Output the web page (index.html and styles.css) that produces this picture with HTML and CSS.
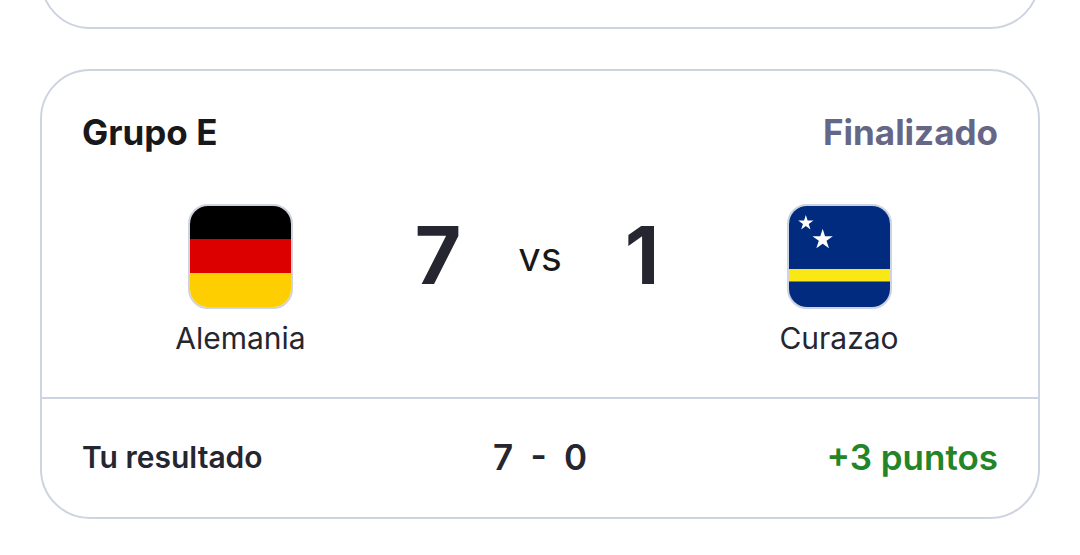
FILE: index.html
```html
<!DOCTYPE html>
<html lang="es">
<head>
<meta charset="utf-8">
<title>Resultados</title>
<link rel="stylesheet" href="styles.css">
</head>
<body>
<main class="list">
  <section class="card card-previous"></section>
  <section class="card">
    <header class="card-header">
      <h2 class="group">Grupo E</h2>
      <span class="status">Finalizado</span>
    </header>
    <div class="match">
      <div class="team">
        <svg class="flag" viewBox="0 0 102 102" preserveAspectRatio="none"><path fill="#000" d="M0 0h102v34H0z"/><path fill="#d00" d="M0 34h102v34H0z"/><path fill="#ffce00" d="M0 68h102v34H0z"/></svg>
        <span class="name">Alemania</span>
      </div>
      <strong class="score score-home">7</strong>
      <span class="versus">vs</span>
      <strong class="score score-away">1</strong>
      <div class="team">
        <svg class="flag" viewBox="0 0 102 102" preserveAspectRatio="none"><path fill="#002b7f" d="M0 0h102v102H0z"/><path fill="#f9e814" d="M0 63.500h102v12.750H0z"/><path fill="#fff" d="M17 9l1.800 5.600h5.900l-4.800 3.500 1.800 5.600-4.700-3.500-4.700 3.500 1.800-5.600-4.800-3.500h5.900z"/><path fill="#fff" d="M34 23l2.400 7.500h7.900l-6.400 4.600 2.500 7.500-6.400-4.600-6.400 4.600 2.500-7.500-6.400-4.600h7.900z"/></svg>
        <span class="name">Curazao</span>
      </div>
    </div>
    <footer class="prediction">
      <span class="label">Tu resultado</span>
      <span class="guess">7 - 0</span>
      <span class="points">+3 puntos</span>
    </footer>
  </section>
</main>
</body>
</html>
```
FILE: styles.css
```css
* { box-sizing: border-box; }
body { margin: 0; height: 555px; overflow: hidden; background: #fff; color: #262631; font-family: Inter, "Liberation Sans", sans-serif; }
.list { display: flex; flex-direction: column; gap: 40px; padding: 0 40px; }
.card { height: 450px; flex: none; border: 2px solid #ced3e1; border-radius: 50px; background: #fff; }
.card-previous { height: 129px; margin-top: -100px; }
.card-header { display: flex; justify-content: space-between; align-items: center; height: 123px; padding: 0 40px 2px; font-size: 35px; line-height: 42px; font-weight: 700; }
.group { margin: 0; color: #18181b; font-size: 35px; font-weight: 700; }
.status { color: #666687; }
.match { display: grid; grid-template-columns: 318px 156px 48px 156px 318px; height: 203px; padding-top: 10px; }
.team { display: flex; flex-direction: column; align-items: center; gap: 11px; padding: 0 1px 0 80px; }
.team:last-child { padding: 0 80px 0 0; }
.flag { display: block; width: 105px; height: 105px; border: 2px solid #ced3e2; border-radius: 20px; }
.name { font-size: 30px; line-height: 36px; }
.score { font-size: 80px; line-height: 102px; text-align: center; }
.versus { color: #18181b; font-size: 40px; line-height: 106px; text-align: center; }
.prediction { display: grid; grid-template-columns: 1fr 120px 1fr; align-items: center; height: 121px; padding: 0 40px 4px; border-top: 2px solid #ced3e1; font-weight: 600; }
.label { font-size: 30px; }
.guess { font-size: 35px; text-align: center; word-spacing: 8.500px; white-space: nowrap; }
.points { color: #238527; font-size: 35px; text-align: right; }
```
